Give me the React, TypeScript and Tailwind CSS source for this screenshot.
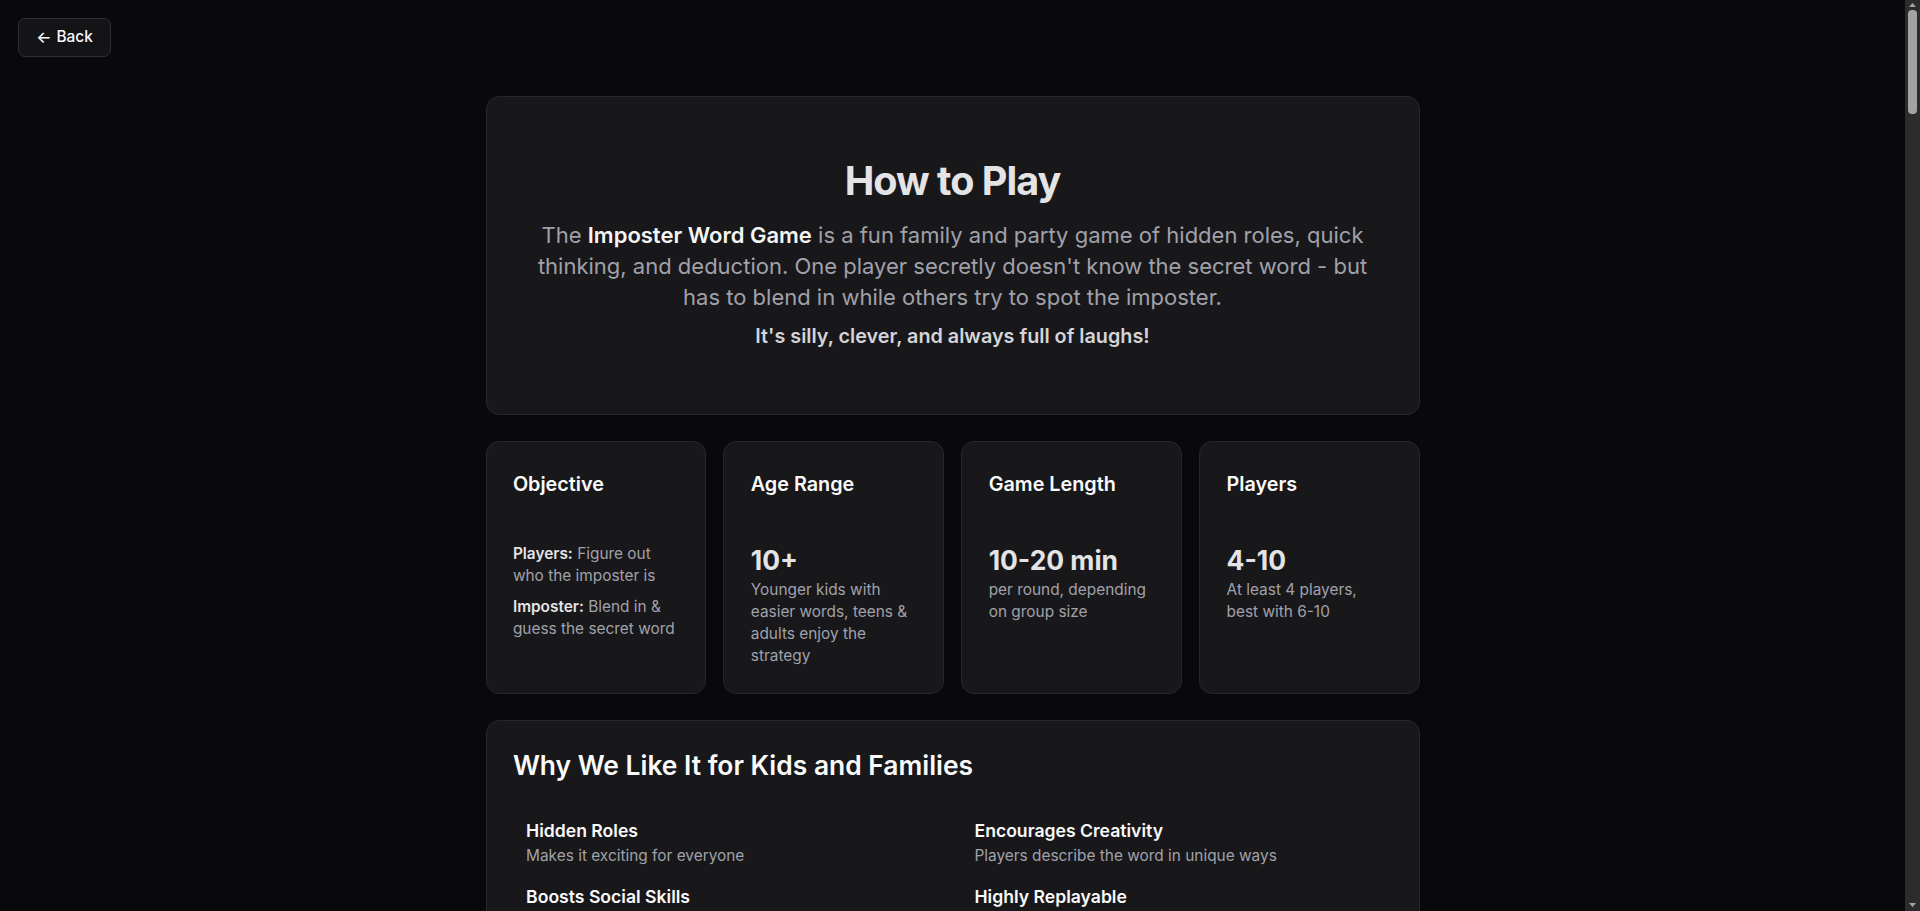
import { ReactNode } from "react";

interface Stat {
  title: string;
  value?: string;
  body: ReactNode;
}

const STATS: Stat[] = [
  {
    title: "Objective",
    body: (
      <div className="space-y-[8.8px]">
        <p>
          <strong className="font-semibold text-[#e4e4e7]">Players:</strong>{" "}
          Figure out who the imposter is
        </p>
        <p>
          <strong className="font-semibold text-[#e4e4e7]">Imposter:</strong>{" "}
          Blend in &amp; guess the secret word
        </p>
      </div>
    ),
  },
  {
    title: "Age Range",
    value: "10+",
    body: "Younger kids with easier words, teens & adults enjoy the strategy",
  },
  {
    title: "Game Length",
    value: "10-20 min",
    body: "per round, depending on group size",
  },
  {
    title: "Players",
    value: "4-10",
    body: "At least 4 players, best with 6-10",
  },
];

const REASONS = [
  ["Hidden Roles", "Makes it exciting for everyone"],
  ["Encourages Creativity", "Players describe the word in unique ways"],
  ["Boosts Social Skills", "Listening, reading people and speaking up"],
  ["Highly Replayable", "New words and new imposters every round"],
  ["Easy to Learn", "Rules take less than a minute to explain"],
  ["No Setup Needed", "Just one phone and a group of friends"],
];

const SECTIONS: { title: string; items: string[] }[] = [
  {
    title: "What You Need",
    items: [
      "One phone or tablet to pass around the group",
      "At least 4 players (the more the merrier)",
      "A timer if you want to keep discussions short",
      "A comfortable space where everyone can see each other",
    ],
  },
  {
    title: "Setting Up the Game",
    items: [
      "Choose a category, or let the game pick one at random",
      "Enter the names of every player taking part",
      "Decide how many imposters there will be this round",
      "Pass the device around so each player can privately see their role",
    ],
  },
  {
    title: "Playing a Round",
    items: [
      "Every player except the imposter sees the secret word",
      "Going around the circle, each player says one word related to the secret word",
      "The imposter listens carefully and tries to blend in",
      "After one or two rounds of clues, the group discusses who seems suspicious",
      "Everyone votes on who they think the imposter is",
    ],
  },
  {
    title: "Winning the Game",
    items: [
      "If the group catches the imposter, the players win the round",
      "If the imposter is not caught, the imposter wins",
      "A caught imposter gets one last chance to guess the secret word and steal the win",
    ],
  },
  {
    title: "Tips for Players",
    items: [
      "Give clues that are specific enough to prove you know the word",
      "Don't be so obvious that the imposter can guess the word",
      "Watch for vague or hesitant answers",
      "Pay attention to who copies other people's clues",
    ],
  },
  {
    title: "Tips for the Imposter",
    items: [
      "Listen to the first few clues before giving your own",
      "Keep your clue general but confident",
      "Act just as suspicious of others as everyone else does",
      "Use the discussion to narrow down what the word might be",
    ],
  },
  {
    title: "Fun Variations",
    items: [
      "Two imposters for larger groups",
      "Themed rounds: movies, animals, food, places and more",
      "Speed round: only five seconds to give a clue",
      "Silent round: act out your clue instead of saying it",
    ],
  },
  {
    title: "Frequently Asked Questions",
    items: [
      "Can we play with fewer than 4 players? It works, but it is much harder to hide.",
      "Is it suitable for young kids? Yes, choose an easy category with familiar words.",
      "How many rounds should we play? As many as you like, most groups play 5 to 10.",
      "Do we need an internet connection? No, everything runs on a single device.",
    ],
  },
];

function StatCard({ stat }: { stat: Stat }) {
  return (
    <div className="rounded-[13px] border border-[#27272a] bg-[#18181b] p-[26.4px]">
      <h3 className="text-[19.8px] font-semibold leading-[30.8px] text-[#fafafa]">
        {stat.title}
      </h3>
      <div className="mt-[44px] text-[15.4px] leading-[22px] text-[#a1a1aa]">
        {stat.value && (
          <div className="text-[26.4px] font-bold leading-[35.2px] text-[#e4e4e7]">
            {stat.value}
          </div>
        )}
        {stat.body}
      </div>
    </div>
  );
}

// the reference was captured with a classic browser scrollbar on the right
function Scrollbar() {
  return (
    <div className="fixed right-0 top-0 flex h-screen w-[15px] flex-col items-center bg-[#2c2c2c]">
      <svg width="9" height="6" viewBox="0 0 9 6" className="mt-[2px]">
        <path d="M4.5 1 L8 5 L1 5 Z" fill="#a3a3a3" />
      </svg>
      <div className="mt-[2px] h-[104px] w-[9px] rounded-[4px] bg-[#a3a3a3]" />
      <div className="flex-1" />
      <svg width="9" height="6" viewBox="0 0 9 6" className="mb-[3px]">
        <path d="M1 1 L8 1 L4.5 5 Z" fill="#a3a3a3" />
      </svg>
    </div>
  );
}

export default function App() {
  return (
    <div className="min-h-[7682px] bg-[#09090b] pr-[15px] font-['Inter',sans-serif] text-[#fafafa]">
      <div className="px-[17.6px] pt-[17.6px]">
        <button className="flex h-[39.6px] items-center gap-[5px] rounded-[7px] border border-[#2f2f34] bg-[#141417] px-[17.6px] text-[15.4px] font-medium leading-[22px] text-[#fafafa]">
          <span className="text-[16px]">←</span>
          <span>Back</span>
        </button>
      </div>

      <main className="mx-auto mt-[38.8px] flex w-[934px] flex-col gap-[26.4px] pb-[88px]">
        <section className="rounded-[13px] border border-[#27272a] bg-[#18181b] px-[35px] py-[61.6px] text-center">
          <h1 className="text-[39.6px] font-bold leading-[44px] tracking-tight text-[#e4e4e7]">
            How to Play
          </h1>
          <p className="mx-auto mt-[17.6px] max-w-[845px] text-[22px] leading-[30.8px] text-[#a1a1aa]">
            The{" "}
            <strong className="font-semibold text-[#f4f4f5]">
              Imposter Word Game
            </strong>{" "}
            is a fun family and party game of hidden roles, quick thinking, and
            deduction. One player secretly doesn't know the secret word - but
            has to blend in while others try to spot the imposter.
          </p>
          <p className="mt-[8.8px] text-[19.8px] font-semibold leading-[30.8px] text-[#d4d4d8]">
            It's silly, clever, and always full of laughs!
          </p>
        </section>

        <div className="grid grid-cols-4 gap-[17.6px]">
          {STATS.map((s) => (
            <StatCard key={s.title} stat={s} />
          ))}
        </div>

        <section className="rounded-[13px] border border-[#27272a] bg-[#18181b] p-[26.4px]">
          <h2 className="text-[26.4px] font-semibold leading-[35.2px] text-[#fafafa]">
            Why We Like It for Kids and Families
          </h2>
          <div className="mt-[26.4px] grid grid-cols-2 gap-x-[17.6px]">
            {REASONS.map(([title, desc]) => (
              <div key={title} className="px-[13.2px] py-[8.8px]">
                <h4 className="text-[17.6px] font-semibold leading-[26.4px] text-[#fafafa]">
                  {title}
                </h4>
                <p className="text-[15.4px] leading-[22px] text-[#a1a1aa]">
                  {desc}
                </p>
              </div>
            ))}
          </div>
        </section>

        {SECTIONS.map((sec) => (
          <section
            key={sec.title}
            className="rounded-[13px] border border-[#27272a] bg-[#18181b] p-[26.4px]"
          >
            <h2 className="text-[26.4px] font-semibold leading-[35.2px] text-[#fafafa]">
              {sec.title}
            </h2>
            <ol className="mt-[26.4px] flex flex-col gap-[13.2px]">
              {sec.items.map((item, i) => (
                <li
                  key={item}
                  className="flex gap-[13.2px] px-[13.2px] text-[17.6px] leading-[26.4px] text-[#a1a1aa]"
                >
                  <span className="font-semibold text-[#fafafa]">{i + 1}.</span>
                  <span>{item}</span>
                </li>
              ))}
            </ol>
          </section>
        ))}
      </main>
      <Scrollbar />
    </div>
  );
}
